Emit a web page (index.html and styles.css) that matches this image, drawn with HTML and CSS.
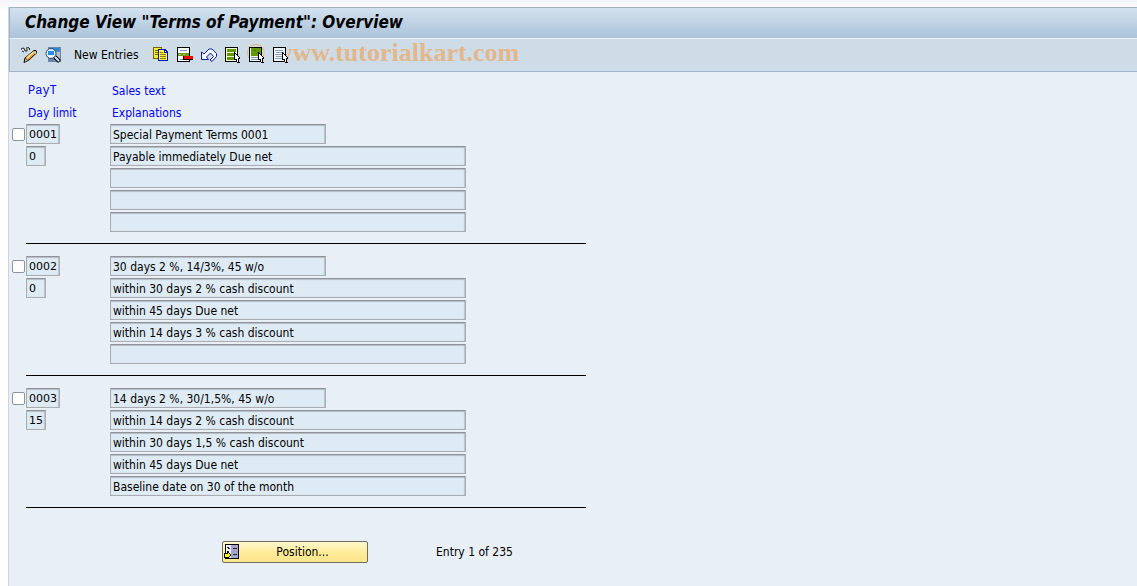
FILE: index.html
```html
<!DOCTYPE html>
<html lang="en">
<head>
    <meta charset="UTF-8">
    <title>Change View "Terms of Payment": Overview</title>
    <link rel="stylesheet" href="styles.css">
</head>
<body>
    <main class="window">
        <header class="title-bar">
            <h1>Change View "Terms of Payment": Overview</h1>
        </header>
        <div class="toolbar">
            <button class="tool" aria-label="Display/Change">
                <svg class="smooth" viewBox="0 0 16 16"><path d="M0 3q0-2 2-2t2 3q3 1 2-2t2-1q2 1 0 2M1 4l2 1" fill="none" stroke="#222"/><path d="M3 15.500l1-4.500 9-7.500h2l1 2-8 7.500z" fill="#f59a23" stroke="#000"/><path d="M5 10.500l7-6 1.500 1-7 6z" fill="#ffe08a"/><path d="M3.500 15l1-3.500 2 2z" fill="#fff" stroke="#000" stroke-width=".5"/><path d="M13 4.500h1.500l.7 1.500-1 1-2-2z" fill="#b9cde0"/></svg>
            </button>
            <button class="tool" aria-label="Details">
                <svg class="smooth" viewBox="0 0 16 16"><path d="M3 0h13v15h-13z" fill="#6b87a9"/><path d="M4 1h10v3h-10z" fill="#2389dc"/><path d="M11 5h4v9h-4z" fill="#aec0d2"/><circle cx="6" cy="6.500" r="5" fill="#dff1ff" stroke="#33475f"/><path d="M3 4h6v4h-6z" fill="#258ee4"/><path d="M3 9h6v1h-6z" fill="#fff"/><path d="M10 10l4.500 4.500" stroke="#000" stroke-width="4"/><path d="M10 10l4 4" stroke="#d7e5f1" stroke-width="2"/></svg>
            </button>
            <button class="tool tool-text">New Entries</button>
            <button class="tool" aria-label="Copy as">
                <svg viewBox="0 0 16 16"><path d="M0 0h9v12h-9z" fill="#746500"/><path d="M1 1h7v10h-7z" fill="#ffec3d"/><path d="M2 3h3v1h-3zM2 5h3v1h-3zM2 7h3v1h-3z" fill="#746500"/><path d="M5 2h7l3 3v9h-10z" fill="#0018b8"/><path d="M6 3h5v3h3v7h-8z" fill="#fff23b"/><path d="M12 4l1 1h-1z" fill="#fff"/><path d="M7 5h3v1h-3zM7 7h6v1h-6zM7 9h6v1h-6zM7 11h6v1h-6z" fill="#8d7c1c"/></svg>
            </button>
            <button class="tool" aria-label="Delete">
                <svg viewBox="0 0 16 16"><path d="M0 0h13v15h-13z" fill="#000"/><path d="M1 1h11v13h-11z" fill="#f5fbff"/><path d="M3 3h7v1h-7zM3 12h5v1h-5z" fill="#8096ac"/><path d="M1 6h11v3h-11z" fill="#6c9d18"/><path d="M2 7h2v1h-2zM6 7h2v1h-2z" fill="#9bc84b"/><path d="M6 9h10v4h-10z" fill="#000"/><path d="M7 9h9v3h-9z" fill="#f00"/></svg>
            </button>
            <button class="tool" aria-label="Undo change">
                <svg class="smooth" viewBox="0 0 16 16"><path d="M.5 5v7.500h7l-2-2.500 4-4 3 3.500-3.500 3.500 2 1.500 4.500-5v-3l-4.500-4.500h-3l-5 5z" fill="#eff7ff" stroke="#161a9a"/></svg>
            </button>
            <button class="tool" aria-label="Select all">
                <svg viewBox="0 0 16 16"><path d="M0 0h13v15h-13z" fill="#000"/><path d="M1 1h11v13h-11z" fill="#f4ffd8"/><path d="M2 2h9v3h-9zM2 6h9v3h-9zM2 10h9v3h-9z" fill="#629800"/><path class="pointer" d="M9 5l6 6-2 1 1 3h-2l-1-3-2 1z"/></svg>
            </button>
            <button class="tool" aria-label="Select block">
                <svg viewBox="0 0 16 16"><path d="M0 0h13v15h-13z" fill="#000"/><path d="M1 1h11v13h-11z" fill="#eef5f9"/><path d="M2 1h10v8h-10z" fill="#629800"/><path d="M5 3h2v1h-2zM8 5h2v1h-2z" fill="#326700"/><path d="M2 10h8v1h-8zM2 12h8v1h-8z" fill="#8299ab"/><path class="pointer" d="M9 5l6 6-2 1 1 3h-2l-1-3-2 1z"/></svg>
            </button>
            <button class="tool" aria-label="Deselect all">
                <svg viewBox="0 0 16 16"><path d="M0 0h13v15h-13z" fill="#000"/><path d="M1 1h11v13h-11z" fill="#eef5f9"/><path d="M2 3h8v1h-8zM3 5h8v1h-8zM2 7h7v1h-7zM3 9h6v1h-6zM2 11h7v1h-7z" fill="#8aa3b6"/><path class="pointer" d="M9 5l6 6-2 1 1 3h-2l-1-3-2 1z"/></svg>
            </button>
            <span class="watermark"><span class="mark">©</span>www.tutorialkart.com</span>
        </div>

        <form class="content">
            <div class="headings">
                <label class="mono" for="payt1">PayT</label>
                <label for="sales1">Sales text</label>
                <label for="limit1">Day limit</label>
                <label for="text1">Explanations</label>
            </div>

            <section class="entry">
                <input type="checkbox" aria-label="Select 0001">
                <div class="keys">
                    <input class="field code" id="payt1" value="0001" readonly>
                    <input class="field code days" id="limit1" value="0" readonly>
                </div>
                <div class="texts">
                    <input class="field sales" id="sales1" value="Special Payment Terms 0001" readonly>
                    <input class="field" id="text1" value="Payable immediately Due net" readonly>
                    <input class="field" aria-label="Explanation 2" readonly>
                    <input class="field" aria-label="Explanation 3" readonly>
                    <input class="field" aria-label="Explanation 4" readonly>
                </div>
            </section>

            <section class="entry">
                <input type="checkbox" aria-label="Select 0002">
                <div class="keys">
                    <input class="field code" aria-label="PayT" value="0002" readonly>
                    <input class="field code days" aria-label="Day limit" value="0" readonly>
                </div>
                <div class="texts">
                    <input class="field sales" aria-label="Sales text" value="30 days 2 %, 14/3%, 45 w/o" readonly>
                    <input class="field" aria-label="Explanation 1" value="within 30 days 2 % cash discount" readonly>
                    <input class="field" aria-label="Explanation 2" value="within 45 days Due net" readonly>
                    <input class="field" aria-label="Explanation 3" value="within 14 days 3 % cash discount" readonly>
                    <input class="field" aria-label="Explanation 4" readonly>
                </div>
            </section>

            <section class="entry">
                <input type="checkbox" aria-label="Select 0003">
                <div class="keys">
                    <input class="field code" aria-label="PayT" value="0003" readonly>
                    <input class="field code days" aria-label="Day limit" value="15" readonly>
                </div>
                <div class="texts">
                    <input class="field sales" aria-label="Sales text" value="14 days 2 %, 30/1,5%, 45 w/o" readonly>
                    <input class="field" aria-label="Explanation 1" value="within 14 days 2 % cash discount" readonly>
                    <input class="field" aria-label="Explanation 2" value="within 30 days 1,5 % cash discount" readonly>
                    <input class="field" aria-label="Explanation 3" value="within 45 days Due net" readonly>
                    <input class="field" aria-label="Explanation 4" value="Baseline date on 30 of the month" readonly>
                </div>
            </section>

            <div class="footer">
                <button type="button" class="position">
                    <svg viewBox="0 0 16 16"><path d="M1 0h14v15h-14z" fill="#000"/><path d="M2 1h12v13h-12z" fill="#a5a4d0"/><path d="M2 1h5v13h-5z" fill="#eef"/><path d="M3 3h2v1h-2zM4 4h2v1h-2zM3 7h2v1h-2zM9 4h4v1h-4zM9 10h4v1h-4z" fill="#222"/><path d="M0 9h3v-2l4 4-4 4v-2h-3z" fill="#ff0" stroke="#000"/></svg>
                    <span>Position...</span>
                </button>
                <span>Entry 1 of 235</span>
            </div>
        </form>
    </main>
</body>
</html>
```
FILE: styles.css
```css
* { box-sizing: border-box; }
body { margin: 0; padding: 7px 0 0 8px; min-height: 100vh; display: flex; background: linear-gradient(#f1f5fb, #fff 12px); font-family: "DejaVu Sans Condensed", Tahoma, sans-serif; font-size: 12px; line-height: 16px; color: #000; }
input, button { font: inherit; color: inherit; margin: 0; }

.window { flex: 1; background: #e8eff6; border-left: 1px solid #cbd5e2; }
.title-bar { height: 31px; padding: 4px 15px; border-top: 1px solid #a3b1c7; border-left: 1px solid #a3b1c7; background: linear-gradient(#d3e1ee, #abc3da); }
h1 { margin: 0; font-size: 17px; line-height: 20px; font-style: italic; font-weight: bold; }

.toolbar { position: relative; display: flex; align-items: center; gap: 8px; height: 34px; padding: 0 11px; background: #cedce8; border-top: 1px solid #edf3f8; border-left: 1px solid #a3b1c7; border-bottom: 1px solid #a3b5c9; }
.tool { position: relative; z-index: 1; height: 16px; padding: 0; border: none; background: none; cursor: pointer; }
.tool-text { margin: 0 6px 0 5px; white-space: nowrap; }
svg { display: block; width: 16px; height: 16px; shape-rendering: crispEdges; }
.smooth { shape-rendering: auto; }
.pointer { fill: #fff; stroke: #000; }
.watermark { position: absolute; left: 236px; top: 0; display: flex; gap: 8px; font: bold 26px/28px "Liberation Serif", serif; color: #e2b78c; white-space: nowrap; }
.mark { font-weight: normal; }

.content { padding: 8px 3px; }
.headings { display: grid; grid-template-columns: 84px 356px; grid-auto-rows: 22px; align-items: center; padding-left: 16px; color: #00f; }
.mono { font-family: "Liberation Mono", monospace; }

.entry { display: flex; align-items: flex-start; position: relative; width: 574px; padding-bottom: 24px; }
.entry::after { content: ""; position: absolute; left: 14px; right: 0; bottom: 12px; border-bottom: 1px solid #000; }
.entry input[type="checkbox"] { appearance: none; width: 13px; height: 13px; margin: 4px 1px 0 0; background: #fff; border: 1px solid #8e9499; border-radius: 2px; }
.keys, .texts { display: flex; flex-direction: column; gap: 2px; }
.keys { width: 84px; }
.texts { width: 356px; }
.field { width: 100%; height: 20px; padding: 1px 2px 0; border: 1px solid #a9adb1; border-top-color: #8f9397; border-radius: 1px; background: #deebf5; box-shadow: inset 0 1px 1px #b3bcc4, inset -1px 0 1px #b9c2ca; outline: none; }
.sales { width: 216px; }
.code { width: 34px; font-family: "DejaVu Sans", sans-serif; font-size: 11px; }
.days { width: 20px; }

.footer { display: flex; align-items: center; gap: 68px; padding: 21px 0 0 210px; }
.position { display: flex; align-items: center; width: 146px; height: 22px; padding: 0 2px 0 1px; border: 1px solid #6d6d62; border-radius: 2px; background: linear-gradient(#fff8cf, #ffec9b 50%, #fbe48a); cursor: pointer; }
.position span { flex: 1; text-align: center; }
```
